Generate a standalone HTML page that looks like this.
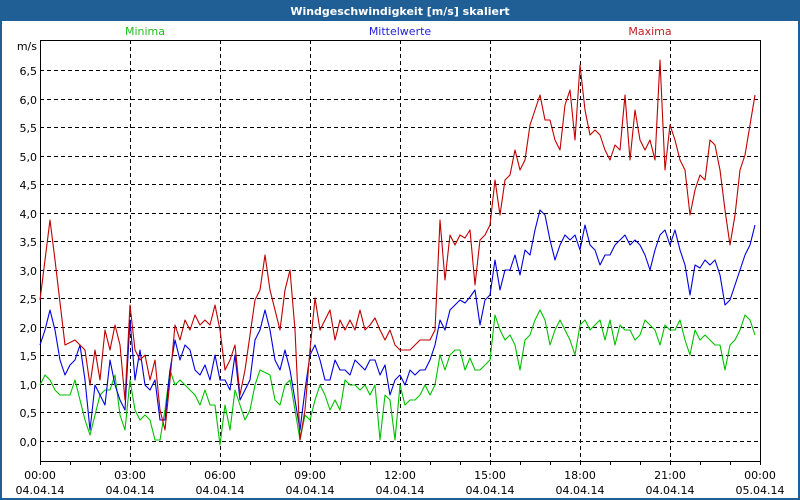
<!DOCTYPE html>
<html><head><meta charset="utf-8"><style>
html,body{margin:0;padding:0;background:#fff}
svg{display:block}
text{font-family:"DejaVu Sans","Liberation Sans",sans-serif;font-size:11px}
</style></head><body>
<svg width="800" height="500" xmlns="http://www.w3.org/2000/svg">
<rect x="0" y="0" width="800" height="500" fill="#fff"/>
<rect x="1" y="1" width="798" height="498" fill="none" stroke="#1f5f96" stroke-width="2"/>
<rect x="0" y="0" width="800" height="21" fill="#1f5f96"/>
<text x="400" y="15" text-anchor="middle" fill="#fff" font-weight="bold">Windgeschwindigkeit [m/s] skaliert</text>
<text x="145" y="35" text-anchor="middle" fill="#20c020">Minima</text>
<text x="400" y="35" text-anchor="middle" fill="#2020e0">Mittelwerte</text>
<text x="650" y="35" text-anchor="middle" fill="#c02020">Maxima</text>
<g stroke="#000" stroke-width="1" stroke-dasharray="4,3" shape-rendering="crispEdges">
<line x1="40" x2="760" y1="70.5" y2="70.5"/><line x1="40" x2="760" y1="99.5" y2="99.5"/>
<line x1="40" x2="760" y1="127.5" y2="127.5"/><line x1="40" x2="760" y1="156.5" y2="156.5"/>
<line x1="40" x2="760" y1="184.5" y2="184.5"/><line x1="40" x2="760" y1="213.5" y2="213.5"/>
<line x1="40" x2="760" y1="241.5" y2="241.5"/><line x1="40" x2="760" y1="270.5" y2="270.5"/>
<line x1="40" x2="760" y1="298.5" y2="298.5"/><line x1="40" x2="760" y1="327.5" y2="327.5"/>
<line x1="40" x2="760" y1="355.5" y2="355.5"/><line x1="40" x2="760" y1="384.5" y2="384.5"/>
<line x1="40" x2="760" y1="412.5" y2="412.5"/><line x1="40" x2="760" y1="441.5" y2="441.5"/>
<line x1="130.5" x2="130.5" y1="40" y2="461"/><line x1="220.5" x2="220.5" y1="40" y2="461"/>
<line x1="310.5" x2="310.5" y1="40" y2="461"/><line x1="400.5" x2="400.5" y1="40" y2="461"/>
<line x1="490.5" x2="490.5" y1="40" y2="461"/><line x1="580.5" x2="580.5" y1="40" y2="461"/>
<line x1="670.5" x2="670.5" y1="40" y2="461"/>
</g>
<path d="M40.5 40.5H760.5V461.5H40.5Z" fill="none" stroke="#000" shape-rendering="crispEdges"/>
<g stroke="#000" shape-rendering="crispEdges">
<path d="M70.5 461v4M100.5 461v4M130.5 461v4M160.5 461v4M190.5 461v4M220.5 461v4M250.5 461v4M280.5 461v4M310.5 461v4M340.5 461v4M370.5 461v4M400.5 461v4M430.5 461v4M460.5 461v4M490.5 461v4M520.5 461v4M550.5 461v4M580.5 461v4M610.5 461v4M640.5 461v4M670.5 461v4M700.5 461v4M730.5 461v4M760.5 461v4M40.5 461v4"/>
</g>
<g fill="#000" text-anchor="end">
<text x="37" y="50">m/s</text>
<text x="37" y="75">6,5</text><text x="37" y="104">6,0</text><text x="37" y="132">5,5</text>
<text x="37" y="161">5,0</text><text x="37" y="189">4,5</text><text x="37" y="218">4,0</text>
<text x="37" y="246">3,5</text><text x="37" y="275">3,0</text><text x="37" y="303">2,5</text>
<text x="37" y="332">2,0</text><text x="37" y="360">1,5</text><text x="37" y="389">1,0</text>
<text x="37" y="417">0,5</text><text x="37" y="446">0,0</text>
</g>
<g fill="#000" text-anchor="middle">
<text x="40" y="479">00:00</text><text x="40" y="494">04.04.14</text>
<text x="130" y="479">03:00</text><text x="130" y="494">04.04.14</text>
<text x="220" y="479">06:00</text><text x="220" y="494">04.04.14</text>
<text x="310" y="479">09:00</text><text x="310" y="494">04.04.14</text>
<text x="400" y="479">12:00</text><text x="400" y="494">04.04.14</text>
<text x="490" y="479">15:00</text><text x="490" y="494">04.04.14</text>
<text x="580" y="479">18:00</text><text x="580" y="494">04.04.14</text>
<text x="670" y="479">21:00</text><text x="670" y="494">04.04.14</text>
<text x="760" y="479">00:00</text><text x="760" y="494">05.04.14</text>
</g>
<g fill="none" stroke-width="1.1" stroke-linejoin="round">
<polyline stroke="#00c000" points="40,385 45,375 50,380 55,390 60,395 70,395 75,380 80,400 85,420 90,435 95,415 100,395 105,390 110,390 115,375 120,415 125,430 130,380 135,410 140,420 145,415 150,420 155,440 160,440 165,410 170,370 175,385 180,380 190,390 195,395 200,405 205,390 210,405 215,405 220,445 225,405 230,430 235,390 240,405 245,420 250,410 255,385 260,370 270,375 275,400 280,405 285,385 290,380 295,410 300,440 305,415 310,420 315,400 320,385 325,395 330,410 335,400 340,410 345,380 350,385 355,385 360,390 365,385 370,395 375,385 380,440 385,395 390,400 395,440 400,385 405,405 410,400 415,400 420,395 425,385 430,395 435,385 440,355 445,370 450,355 455,350 460,350 465,370 470,358 475,370 480,370 485,365 490,360 495,315 500,330 505,340 510,335 515,345 520,370 525,340 530,335 535,320 540,310 545,320 550,345 555,330 560,320 565,330 570,340 575,355 580,325 585,320 590,330 595,325 600,320 605,340 610,320 615,345 620,325 625,330 630,330 635,340 640,335 645,320 650,325 655,330 660,345 665,325 670,330 675,330 680,320 685,340 690,355 695,330 700,340 705,335 710,340 715,345 720,345 725,370 730,345 735,340 740,330 745,315 750,320 755,335"/>
<polyline stroke="#0000e0" points="40,345 45,330 50,310 55,330 60,360 65,375 70,365 75,360 80,345 85,380 90,430 95,385 100,395 105,405 110,360 115,385 120,400 125,410 130,320 135,380 140,350 145,385 150,390 155,380 160,420 165,420 170,370 175,340 180,360 185,345 190,350 195,370 200,375 205,365 210,380 215,355 220,380 225,380 230,390 235,355 240,400 245,390 250,380 255,340 260,330 265,310 270,330 275,360 280,370 285,350 290,370 295,400 300,430 305,390 310,355 315,345 320,360 325,380 330,380 335,360 340,370 345,370 350,375 355,360 360,365 365,370 370,360 375,360 380,375 385,365 390,395 395,380 400,375 405,385 410,370 415,375 420,370 425,370 430,360 435,345 440,320 445,330 450,310 455,305 460,300 465,303 470,297 475,290 480,325 485,300 490,295 495,260 500,290 505,270 510,270 515,255 520,275 525,250 530,255 535,230 540,210 545,215 550,240 555,260 560,245 565,235 570,240 575,235 580,250 585,225 590,245 595,250 600,265 605,255 610,255 615,245 620,240 625,235 630,245 635,240 640,245 645,255 650,270 655,250 660,235 665,230 670,245 675,230 680,250 685,265 690,295 695,265 700,268 705,260 710,265 715,260 720,275 725,305 730,300 735,285 740,270 745,255 750,245 755,225"/>
<polyline stroke="#c00000" points="40,300 50,220 55,260 65,345 75,340 85,350 90,385 95,350 100,380 105,330 110,350 115,325 120,345 125,400 130,305 135,350 140,360 145,355 150,380 155,360 160,410 165,430 170,380 175,325 180,340 185,320 190,330 195,315 200,325 205,320 210,325 215,305 220,330 225,370 230,360 235,345 240,395 245,370 255,300 260,290 265,255 270,290 280,330 285,290 290,270 295,330 300,440 305,410 310,350 315,298 320,330 330,310 335,340 340,320 345,330 350,320 355,330 360,310 365,330 370,325 375,318 380,330 385,340 390,330 395,345 400,350 410,350 420,340 430,340 435,330 440,220 445,280 450,235 455,245 460,235 465,238 470,230 475,285 480,240 485,235 490,225 495,180 500,215 505,180 510,175 515,150 520,170 525,160 530,125 535,110 540,95 545,120 550,120 555,140 560,150 565,105 570,90 575,140 580,65 585,110 590,135 595,130 600,135 605,150 610,160 615,145 620,150 625,95 630,160 635,110 640,140 645,150 650,140 655,160 660,60 665,170 670,125 675,140 680,160 685,170 690,215 695,190 700,175 705,180 710,140 715,145 720,170 725,210 730,245 735,215 740,170 745,155 750,125 755,95"/>
</g>
</svg>
</body></html>
